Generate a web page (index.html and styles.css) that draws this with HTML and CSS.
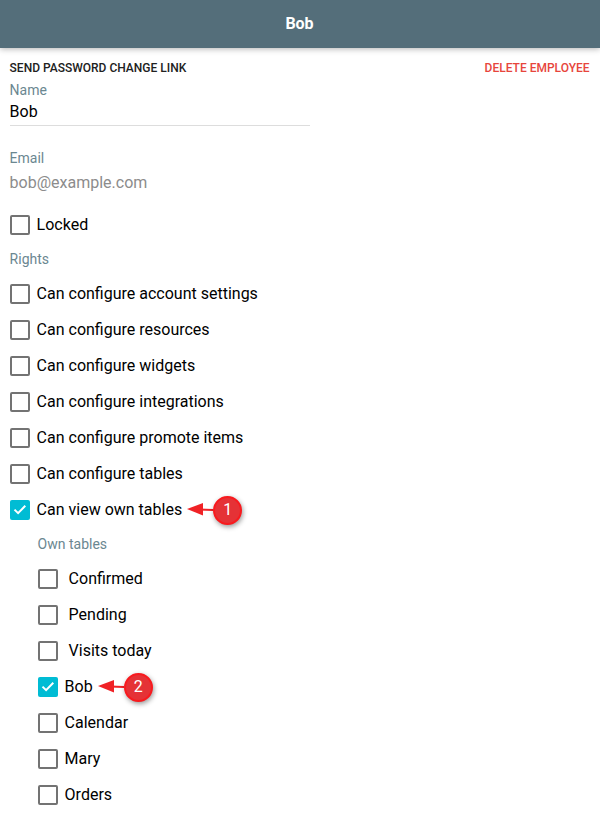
FILE: index.html
```
<!DOCTYPE html>
<html lang="en">
<head>
    <meta charset="UTF-8">
    <meta name="viewport" content="width=device-width, initial-scale=1.0">
    <title>Bob</title>
    <link rel="stylesheet" href="styles.css">
</head>
<body>
    <header class="header">Bob</header>

    <main class="content">
        <div class="actions">
            <span class="action">Send password change link</span>
            <span class="action delete">Delete employee</span>
        </div>

        <div class="field name">
            <div class="label">Name</div>
            <div class="value">Bob</div>
        </div>

        <div class="field email">
            <div class="label">Email</div>
            <div class="value">bob@example.com</div>
        </div>

        <div class="check"><span class="box"></span>Locked</div>

        <div class="label title">Rights</div>
        <div class="check"><span class="box"></span>Can configure account settings</div>
        <div class="check"><span class="box"></span>Can configure resources</div>
        <div class="check"><span class="box"></span>Can configure widgets</div>
        <div class="check"><span class="box"></span>Can configure integrations</div>
        <div class="check"><span class="box"></span>Can configure promote items</div>
        <div class="check"><span class="box"></span>Can configure tables</div>
        <div class="check">
            <span class="box checked"><svg viewBox="0 0 20 20"><path d="M4.5 9.6l3.6 3.6 7.2-7.4"/></svg></span>Can view own tables
            <span class="marker">
                <svg class="arrow" viewBox="0 0 26 14"><path class="line" d="M12 6.5L26 7"/><path class="head" d="M0 6L16 0V12.5z"/></svg>
                <span class="num">1</span>
            </span>
        </div>

        <div class="sub">
            <div class="label title">Own tables</div>
            <div class="check indent"><span class="box"></span>Confirmed</div>
            <div class="check indent"><span class="box"></span>Pending</div>
            <div class="check indent"><span class="box"></span>Visits today</div>
            <div class="check">
                <span class="box checked"><svg viewBox="0 0 20 20"><path d="M4.5 9.6l3.6 3.6 7.2-7.4"/></svg></span>Bob
                <span class="marker">
                    <svg class="arrow" viewBox="0 0 26 14"><path class="line" d="M12 6.5L26 7"/><path class="head" d="M0 6L16 0V12.5z"/></svg>
                    <span class="num">2</span>
                </span>
            </div>
            <div class="check"><span class="box"></span>Calendar</div>
            <div class="check"><span class="box"></span>Mary</div>
            <div class="check"><span class="box"></span>Orders</div>
        </div>
    </main>
</body>
</html>
```
FILE: styles.css
```
*{
    margin: 0;
    padding: 0;
    box-sizing: border-box;
}

body{
    background-color: #fff;
    color: #000;
    font-family: Roboto, sans-serif;
    font-size: 16px;
    overflow: hidden;
}

.header{
    height: 48px;
    line-height: 48px;
    padding-right: 1px;
    text-align: center;
    color: #fff;
    font-weight: 700;
    background-color: #546e7a;
    box-shadow: 0 1px 6px rgba(0, 0, 0, 0.3);
}

.content{
    padding: 12px 10.4px 0 9.6px;
}

.actions{
    display: flex;
    justify-content: space-between;
    height: 20px;
    margin-bottom: 2px;
}

.action{
    color: #212121;
    font-size: 12px;
    line-height: 16px;
    font-weight: 500;
    text-transform: uppercase;
}

.delete{
    color: #e7453c;
}

.label{
    font-size: 14px;
    line-height: 16px;
    color: #6b8791;
}

.field{
    width: 300px;
}

.value{
    line-height: 20px;
}

.name{
    height: 44px;
    border-bottom: 1px solid #ddd;
}

.name .value{
    margin-top: 4px;
}

.email{
    margin-top: 24px;
    height: 56px;
}

.email .value{
    margin-top: 7px;
    color: #8c8c8c;
}

.check{
    display: flex;
    align-items: center;
    height: 36px;
}

.box{
    width: 20px;
    height: 20px;
    margin-top: 2px;
    margin-right: 7px;
    border: 2px solid #737373;
    border-radius: 2px;
}

.indent .box{
    margin-right: 11px;
}

.checked{
    border: 0;
    background-color: #00bcd4;
}

.checked svg{
    display: block;
    width: 20px;
    height: 20px;
    fill: none;
    stroke: #fff;
    stroke-width: 2;
}

.title{
    margin: 9px 0 8px;
}

.sub{
    padding-left: 28px;
}

.marker{
    display: flex;
    align-items: center;
    margin-top: 2px;
    margin-left: 5px;
}

.arrow{
    width: 26px;
    height: 14px;
}

.line{
    stroke: #f02226;
    stroke-width: 2;
}

.head{
    fill: #f02226;
}

.num{
    width: 29px;
    height: 29px;
    border: 2px solid #f81a1e;
    border-radius: 50%;
    background-color: #e53236;
    color: #fff;
    font-size: 16px;
    line-height: 24px;
    text-align: center;
    box-shadow: 1px 2px 5px rgba(0, 0, 0, 0.4);
}
```
